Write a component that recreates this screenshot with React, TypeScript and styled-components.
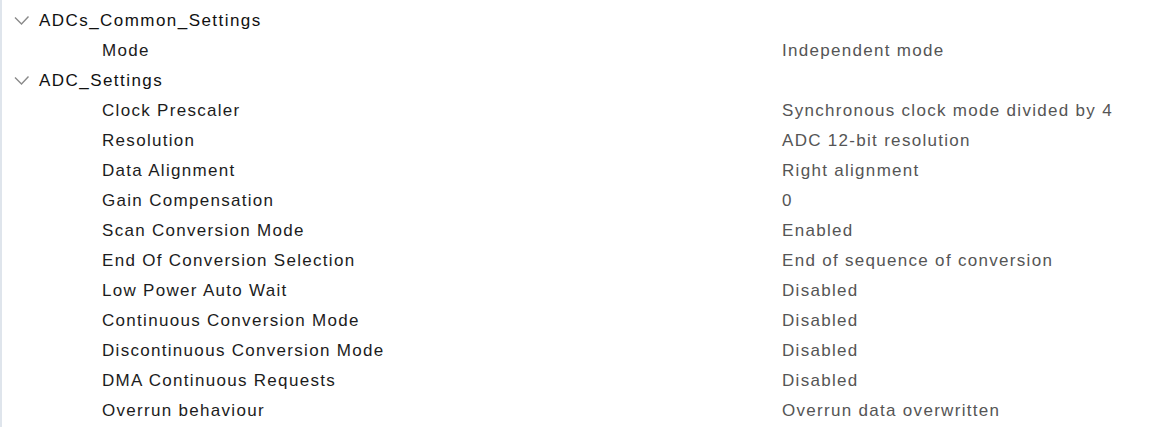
import React from 'react';
import styled, { createGlobalStyle } from 'styled-components';

const GlobalStyle = createGlobalStyle`
  html, body {
    margin: 0;
    padding: 0;
    background: #ffffff;
  }
  body {
    font-family: 'Liberation Sans', Arial, sans-serif;
  }
`;

interface Param {
  name: string;
  value: string;
}

interface Group {
  title: string;
  params: Param[];
}

const groups: Group[] = [
  {
    title: 'ADCs_Common_Settings',
    params: [{ name: 'Mode', value: 'Independent mode' }],
  },
  {
    title: 'ADC_Settings',
    params: [
      { name: 'Clock Prescaler', value: 'Synchronous clock mode divided by 4' },
      { name: 'Resolution', value: 'ADC 12-bit resolution' },
      { name: 'Data Alignment', value: 'Right alignment' },
      { name: 'Gain Compensation', value: '0' },
      { name: 'Scan Conversion Mode', value: 'Enabled' },
      { name: 'End Of Conversion Selection', value: 'End of sequence of conversion' },
      { name: 'Low Power Auto Wait', value: 'Disabled' },
      { name: 'Continuous Conversion Mode', value: 'Disabled' },
      { name: 'Discontinuous Conversion Mode', value: 'Disabled' },
      { name: 'DMA Continuous Requests', value: 'Disabled' },
      { name: 'Overrun behaviour', value: 'Overrun data overwritten' },
    ],
  },
];

const Panel = styled.div`
  width: 1167px;
  height: 427px;
  box-sizing: border-box;
  border-left: 2px solid #dfe5ec;
  padding-top: 6px;
  overflow: hidden;
`;

const Row = styled.div`
  display: flex;
  align-items: center;
  height: 30px;
  font-size: 17px;
  letter-spacing: 1.3px;
`;

const Chevron = styled.span`
  display: flex;
  align-items: center;
  width: 37px;
  padding-left: 12px;
  box-sizing: border-box;
  svg {
    width: 16px;
    height: 10px;
  }
`;

const GroupTitle = styled.span`
  color: #111111;
  letter-spacing: 1.45px;
`;

const Name = styled.span`
  width: 680px;
  padding-left: 100px;
  color: #1c1c1c;
`;

const Value = styled.span`
  color: #555555;
`;

const ChevronIcon = () => (
  <svg viewBox="0 0 16 10">
    <polyline points="1,1.5 7.5,8 14.5,0.5" fill="none" stroke="#8a8a8a" strokeWidth="1.4" />
  </svg>
);

export default function App() {
  return (
    <>
      <GlobalStyle />
      <Panel>
        {groups.map((g) => (
          <React.Fragment key={g.title}>
            <Row>
              <Chevron>
                <ChevronIcon />
              </Chevron>
              <GroupTitle>{g.title}</GroupTitle>
            </Row>
            {g.params.map((p) => (
              <Row key={p.name}>
                <Name>{p.name}</Name>
                <Value>{p.value}</Value>
              </Row>
            ))}
          </React.Fragment>
        ))}
      </Panel>
    </>
  );
}
